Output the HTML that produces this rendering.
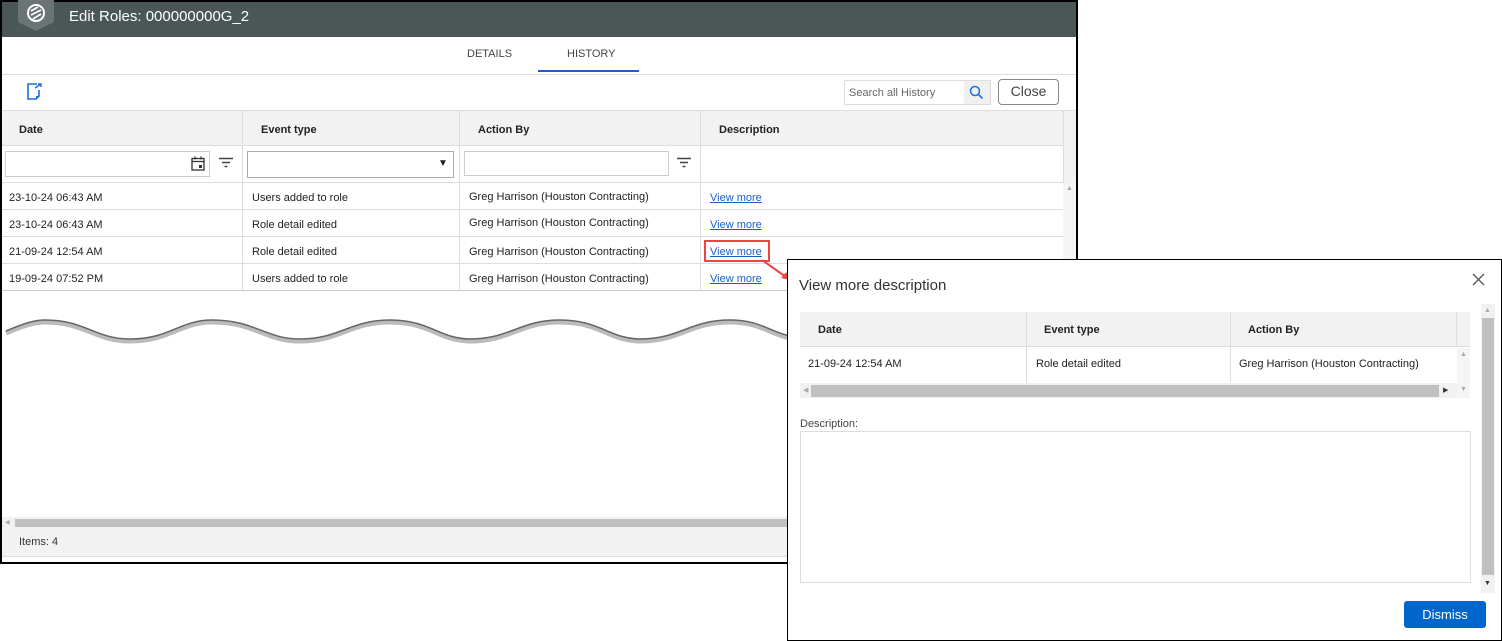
<!DOCTYPE html>
<html><head><meta charset="utf-8"><style>
*{box-sizing:border-box;margin:0;padding:0}
body{width:1502px;height:641px;background:#fff;font-family:"Liberation Sans",sans-serif;position:relative;overflow:hidden;color:#222}
.a{position:absolute}
.t{font-size:11px;color:#222;white-space:nowrap}
.h{font-size:11px;font-weight:bold;color:#222;white-space:nowrap}
.link{font-size:11px;color:#1a5fc4;text-decoration:underline;white-space:nowrap}
</style></head><body>
<!-- main window -->
<div class="a" style="left:0;top:0;width:1078px;height:564px;border:2px solid #000;background:#fff"></div>
<div class="a" style="left:2px;top:2px;width:1074px;height:35px;background:#4b5657"></div>
<svg class="a" style="left:17px;top:0" width="38" height="32" viewBox="0 0 38 32"><path d="M1 0 H37 V22 L19 31 L1 22Z" fill="#6a7475"/><circle cx="19" cy="13" r="8" fill="none" stroke="#fff" stroke-width="2"/><path d="M14 11 L21 7 M14 15 L24 10 M16 19 L24 14" stroke="#fff" stroke-width="1.8"/></svg>
<div class="a" style="left:69px;top:8px;font-size:15px;color:#fff">Edit Roles: 000000000G_2</div>
<div class="a t" style="left:467px;top:48px;color:#444">DETAILS</div>
<div class="a t" style="left:567px;top:48px;color:#444">HISTORY</div>
<div class="a" style="left:538px;top:70px;width:101px;height:2px;background:#1a5fc4"></div>
<div class="a" style="left:2px;top:74px;width:1074px;height:1px;background:#ddd"></div>
<svg class="a" style="left:26px;top:83px" width="16" height="18" viewBox="0 0 16 18"><path d="M11 1 H2 V16 H10 L13 13 V7" fill="none" stroke="#1a6fd8" stroke-width="1.6"/><path d="M9 5 L15 1 M12 1 H15 V4" stroke="#1a6fd8" stroke-width="1.4" fill="none"/><path d="M10 16 V13 H13Z" fill="#1a6fd8"/></svg>
<div class="a" style="left:844px;top:80px;width:147px;height:25px;border:1px solid #ddd;background:#fff"></div>
<div class="a" style="left:964px;top:81px;width:26px;height:23px;background:#f0f0f0"></div>
<svg class="a" style="left:969px;top:85px" width="15" height="15" viewBox="0 0 15 15"><circle cx="6" cy="6" r="4.5" fill="none" stroke="#1a6fd8" stroke-width="1.5"/><path d="M9.5 9.5 L13.5 13.5" stroke="#1a6fd8" stroke-width="1.6"/></svg>
<div class="a t" style="left:849px;top:87px;color:#666">Search all History</div>
<div class="a" style="left:998px;top:79px;width:61px;height:26px;border:1.5px solid #888;border-radius:4px;font-size:14px;color:#444;text-align:center;line-height:23px">Close</div>
<div class="a" style="left:2px;top:110px;width:1074px;height:1px;background:#ddd"></div>
<!-- grid header -->
<div class="a" style="left:2px;top:111px;width:1061px;height:35px;background:#f2f2f2;border-bottom:1px solid #ddd"></div>
<div class="a" style="left:1063px;top:111px;width:13px;height:72px;background:#f2f2f2"></div>
<div class="a h" style="left:19px;top:124px">Date</div>
<div class="a h" style="left:261px;top:124px">Event type</div>
<div class="a h" style="left:478px;top:124px">Action By</div>
<div class="a h" style="left:719px;top:124px">Description</div>
<div class="a" style="left:242px;top:111px;width:1px;height:180px;background:#ddd"></div>
<div class="a" style="left:459px;top:111px;width:1px;height:180px;background:#ddd"></div>
<div class="a" style="left:700px;top:111px;width:1px;height:180px;background:#ddd"></div>
<div class="a" style="left:1063px;top:111px;width:1px;height:180px;background:#ddd"></div>
<!-- filters -->
<div class="a" style="left:5px;top:151px;width:205px;height:26px;border:1px solid #ccc;background:#fff"></div>
<svg class="a" style="left:191px;top:156px" width="14" height="15" viewBox="0 0 14 15"><rect x="1" y="2.5" width="12" height="11.5" fill="none" stroke="#333" stroke-width="1.3"/><path d="M1 5.5H13M4 0.5V3.5M10 0.5V3.5" stroke="#333" stroke-width="1.3"/><rect x="8" y="9" width="3" height="3" fill="#333"/></svg>
<svg class="a" style="left:219px;top:157px" width="14" height="12" viewBox="0 0 14 12"><path d="M0 1.5H14M3 5.5H11M5.5 9.5H8.5" stroke="#444" stroke-width="1.4"/></svg>
<div class="a" style="left:247px;top:151px;width:207px;height:27px;border:1px solid #aaa;background:#fff"></div>
<div class="a" style="left:438px;top:158px;font-size:10px;color:#222">▼</div>
<div class="a" style="left:464px;top:151px;width:205px;height:25px;border:1px solid #ccc;background:#fff"></div>
<svg class="a" style="left:677px;top:157px" width="14" height="12" viewBox="0 0 14 12"><path d="M0 1.5H14M3 5.5H11M5.5 9.5H8.5" stroke="#444" stroke-width="1.4"/></svg>
<div class="a" style="left:2px;top:182px;width:1061px;height:1px;background:#ddd"></div>
<!-- rows -->
<div class="a t" style="left:9px;top:192px">23-10-24 06:43 AM</div><div class="a t" style="left:252px;top:192px">Users added to role</div><div class="a t" style="left:469px;top:191px">Greg Harrison (Houston Contracting)</div><div class="a link" style="left:710px;top:192px">View more</div>
<div class="a" style="left:2px;top:209px;width:1061px;height:1px;background:#ddd"></div>
<div class="a t" style="left:9px;top:219px">23-10-24 06:43 AM</div><div class="a t" style="left:252px;top:219px">Role detail edited</div><div class="a t" style="left:469px;top:217px">Greg Harrison (Houston Contracting)</div><div class="a link" style="left:710px;top:219px">View more</div>
<div class="a" style="left:2px;top:236px;width:1061px;height:1px;background:#ddd"></div>
<div class="a t" style="left:9px;top:246px">21-09-24 12:54 AM</div><div class="a t" style="left:252px;top:246px">Role detail edited</div><div class="a t" style="left:469px;top:246px">Greg Harrison (Houston Contracting)</div><div class="a link" style="left:710px;top:246px">View more</div>
<div class="a" style="left:704px;top:240px;width:66px;height:22px;border:2px solid #ee4444"></div>
<div class="a" style="left:2px;top:263px;width:1061px;height:1px;background:#ddd"></div>
<div class="a t" style="left:9px;top:273px">19-09-24 07:52 PM</div><div class="a t" style="left:252px;top:273px">Users added to role</div><div class="a t" style="left:469px;top:273px">Greg Harrison (Houston Contracting)</div><div class="a link" style="left:710px;top:273px">View more</div>
<div class="a" style="left:2px;top:290px;width:1061px;height:1px;background:#ccc"></div>
<div class="a" style="left:1063px;top:183px;width:13px;height:108px;background:#f5f5f5"></div>
<div class="a" style="left:1066px;top:185px;font-size:7px;color:#aaa">▲</div>
<svg class="a" style="left:760px;top:258px" width="32" height="24"><path d="M2 2 L26 19" stroke="#ee4444" stroke-width="2"/><path d="M30 22 L21 20 L26 14Z" fill="#ee4444"/></svg>
<!-- wave -->
<svg class="a" style="left:0;top:310px" width="790" height="40"><path d="M6 23 C25 15,35 12,45 12 C85 12,95 31,130 31 C170 31,180 12,212 12 C255 12,265 31,300 31 C340 31,350 12,390 12 C430 12,440 31,470 31 C510 31,520 12,560 12 C600 12,610 31,640 31 C680 31,690 12,730 12 C760 12,770 24,790 28" fill="none" stroke="#bbb" stroke-width="5"/><path d="M6 21 C25 13,35 10,45 10 C85 10,95 29,130 29 C170 29,180 10,212 10 C255 10,265 29,300 29 C340 29,350 10,390 10 C430 10,440 29,470 29 C510 29,520 10,560 10 C600 10,610 29,640 29 C680 29,690 10,730 10 C760 10,770 22,790 26" fill="none" stroke="#666" stroke-width="1.5"/></svg>
<!-- hscroll + footer -->
<div class="a" style="left:2px;top:517px;width:1074px;height:10px;background:#f1f1f1"></div>
<div class="a" style="left:15px;top:519px;width:775px;height:8px;background:#c0c0c0"></div>
<div class="a" style="left:5px;top:519px;font-size:6px;color:#aaa">◀</div>
<div class="a" style="left:2px;top:527px;width:1074px;height:30px;background:#f2f2f2;border-bottom:1px solid #ddd"></div>
<div class="a t" style="left:19px;top:536px;color:#333">Items: 4</div>
<!-- modal -->
<div class="a" style="left:787px;top:259px;width:715px;height:382px;border:1.5px solid #000;background:#fff"></div>
<div class="a" style="left:799px;top:277px;font-size:15px;color:#333">View more description</div>
<svg class="a" style="left:1472px;top:273px" width="13" height="13"><path d="M1 1L12 12M12 1L1 12" stroke="#555" stroke-width="1.3"/></svg>
<div class="a" style="left:800px;top:312px;width:670px;height:35px;background:#f2f2f2;border-bottom:1px solid #ddd"></div>
<div class="a h" style="left:818px;top:324px">Date</div>
<div class="a h" style="left:1044px;top:324px">Event type</div>
<div class="a h" style="left:1248px;top:324px">Action By</div>
<div class="a" style="left:1026px;top:312px;width:1px;height:70px;background:#ddd"></div>
<div class="a" style="left:1230px;top:312px;width:1px;height:70px;background:#ddd"></div>
<div class="a" style="left:1456px;top:312px;width:1px;height:35px;background:#ddd"></div>
<div class="a t" style="left:808px;top:358px">21-09-24 12:54 AM</div>
<div class="a t" style="left:1036px;top:358px">Role detail edited</div>
<div class="a t" style="left:1239px;top:358px">Greg Harrison (Houston Contracting)</div>
<div class="a" style="left:1457px;top:348px;width:13px;height:50px;background:#f5f5f5"></div>
<div class="a" style="left:1460px;top:351px;font-size:7px;color:#aaa">▲</div>
<div class="a" style="left:1460px;top:386px;font-size:7px;color:#aaa">▼</div>
<div class="a" style="left:800px;top:383px;width:657px;height:15px;background:#f1f1f1"></div>
<div class="a" style="left:811px;top:385px;width:628px;height:12px;background:#c0c0c0"></div>
<div class="a" style="left:803px;top:386px;font-size:7px;color:#aaa">◀</div>
<div class="a" style="left:1443px;top:386px;font-size:7px;color:#333">▶</div>
<div class="a" style="left:1481px;top:304px;width:14px;height:289px;background:#f1f1f1"></div>
<div class="a" style="left:1482px;top:318px;width:12px;height:257px;background:#c0c0c0"></div>
<div class="a" style="left:1484px;top:307px;font-size:7px;color:#aaa">▲</div>
<div class="a" style="left:1484px;top:580px;font-size:7px;color:#333">▼</div>
<div class="a t" style="left:800px;top:418px;color:#444">Description:</div>
<div class="a" style="left:800px;top:431px;width:671px;height:152px;border:1px solid #ddd;background:#fff"></div>
<div class="a" style="left:1404px;top:601px;width:82px;height:27px;background:#0066cc;border-radius:3px;color:#fff;font-size:13px;text-align:center;line-height:27px">Dismiss</div>
</body></html>
